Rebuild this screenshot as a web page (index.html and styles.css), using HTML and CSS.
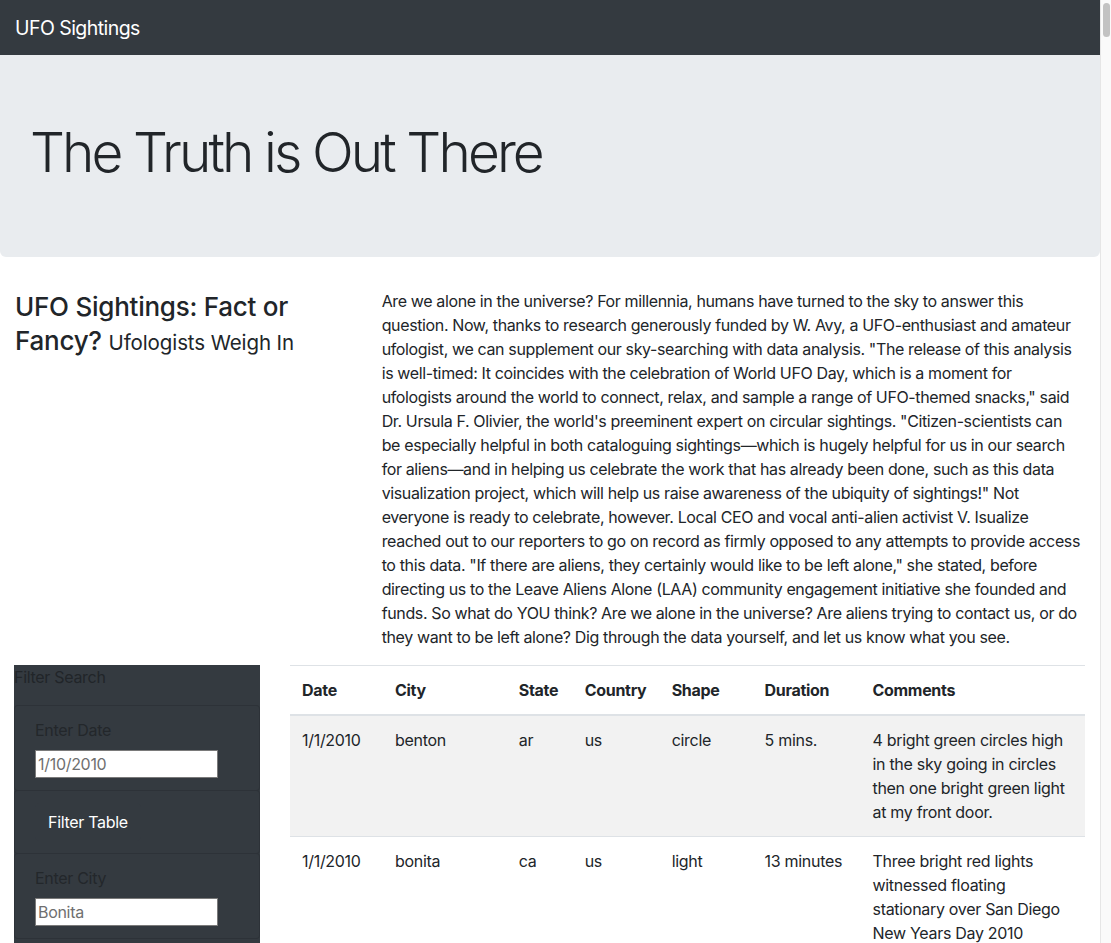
FILE: index.html
```html
<!DOCTYPE html>
<html lang="en">
<head>
<meta charset="utf-8">
<title>UFO Finder</title>
<link rel="stylesheet" href="styles.css">
</head>
<body>
<div class="window">
  <div class="page">
    <nav class="navbar"><a class="brand" href="#">UFO Sightings</a></nav>
    <header class="jumbotron"><h1 class="display">The Truth is Out There</h1></header>
    <div class="container">
      <div class="row">
        <div class="col-4">
          <h3 class="title">UFO Sightings: Fact or Fancy? <small>Ufologists Weigh In</small></h3>
        </div>
        <div class="col-8">
          <p class="lead-text">Are we alone in the universe? For millennia, humans have turned to the sky to answer this<br>
question. Now, thanks to research generously funded by W. Avy, a UFO-enthusiast and amateur<br>
ufologist, we can supplement our sky-searching with data analysis. "The release of this analysis<br>
is well-timed: It coincides with the celebration of World UFO Day, which is a moment for<br>
ufologists around the world to connect, relax, and sample a range of UFO-themed snacks," said<br>
Dr. Ursula F. Olivier, the world's preeminent expert on circular sightings. "Citizen-scientists can<br>
be especially helpful in both cataloguing sightings—which is hugely helpful for us in our search<br>
for aliens—and in helping us celebrate the work that has already been done, such as this data<br>
visualization project, which will help us raise awareness of the ubiquity of sightings!" Not<br>
everyone is ready to celebrate, however. Local CEO and vocal anti-alien activist V. Isualize<br>
reached out to our reporters to go on record as firmly opposed to any attempts to provide access<br>
to this data. "If there are aliens, they certainly would like to be left alone," she stated, before<br>
directing us to the Leave Aliens Alone (LAA) community engagement initiative she founded and<br>
funds. So what do YOU think? Are we alone in the universe? Are aliens trying to contact us, or do<br>
they want to be left alone? Dig through the data yourself, and let us know what you see.</p>
        </div>
      </div>
      <div class="row">
        <div class="col-3">
          <aside class="filters">
            <div class="panel-heading">Filter Search</div>
            <ul class="list-group">
              <li class="list-item">
                <label class="flabel" for="datetime">Enter Date</label>
                <input class="finput" id="datetime" type="text" placeholder="1/10/2010">
              </li>
              <li class="list-item">
                <button class="btn" type="button">Filter Table</button>
              </li>
              <li class="list-item">
                <label class="flabel" for="city">Enter City</label>
                <input class="finput" id="city" type="text" placeholder="Bonita">
              </li>
            </ul>
          </aside>
        </div>
        <div class="col-9">
          <table class="table">
            <thead>
              <tr>
                <th class="c-date">Date</th>
                <th class="c-city">City</th>
                <th class="c-state">State</th>
                <th class="c-country">Country</th>
                <th class="c-shape">Shape</th>
                <th class="c-dur">Duration</th>
                <th class="c-com">Comments</th>
              </tr>
            </thead>
            <tbody>
              <tr class="odd">
                <td>1/1/2010</td><td>benton</td><td>ar</td><td>us</td><td>circle</td><td>5 mins.</td>
                <td>4 bright green circles high in the sky going in circles then one bright green light at my front door.</td>
              </tr>
              <tr>
                <td>1/1/2010</td><td>bonita</td><td>ca</td><td>us</td><td>light</td><td>13 minutes</td>
                <td>Three bright red lights witnessed floating stationary over San Diego New Years Day 2010</td>
              </tr>
            </tbody>
          </table>
        </div>
      </div>
    </div>
  </div>
  <div class="scrollbar"><div class="thumb"></div></div>
</div>
</body>
</html>
```

FILE: styles.css
```css
html, body {
  margin: 0;
  padding: 0;
  height: 943px;
  overflow: hidden;
}
body {
  font-family: Inter, "Liberation Sans", Arial, sans-serif;
  font-size: 16px;
  line-height: 24px;
  color: #212529;
  background: #fff;
}
.window {
  display: flex;
  height: 943px;
}
.page {
  flex: 1;
  min-width: 0;
  overflow: hidden;
}
.scrollbar {
  width: 7px;
  flex: none;
  background: #fafafa;
  border-left: 1px solid #e6e6e6;
  padding: 3px 1px 0 2px;
}
.thumb {
  height: 34px;
  background: #c2c2c2;
  border-radius: 4px;
}
.navbar {
  background: #343a40;
  height: 55px;
  display: flex;
  align-items: center;
  padding: 0 15px;
  box-sizing: border-box;
}
.brand {
  color: #fff;
  font-size: 19.5px;
  line-height: 30px;
  text-decoration: none;
  letter-spacing: -0.55px;
}
.jumbotron {
  background: #e9ecef;
  padding: 64px 30px 63px;
  margin: 0 0 32px;
  border-radius: 0 0 6px 6px;
}
.display {
  margin: 0 0 8px;
  font-size: 55px;
  font-weight: 300;
  line-height: 67px;
  letter-spacing: -2.9px;
}
.container {
  padding: 0 15px;
}
.row {
  display: flex;
  margin: 0 -15px;
}
.col-4 { width: 33.3333%; padding: 0 15px; box-sizing: border-box; }
.col-8 { width: 66.6667%; padding: 0 15px; box-sizing: border-box; }
.col-3 { width: 25%; padding: 0 15px; box-sizing: border-box; }
.col-9 { width: 75%; padding: 0 15px; box-sizing: border-box; }
.title {
  margin: 0;
  font-size: 26px;
  font-weight: 500;
  line-height: 34px;
  padding-top: 1px;
  letter-spacing: -0.25px;
}
.title small {
  font-size: 20.5px;
  font-weight: 400;
  letter-spacing: -0.1px;
}
.lead-text {
  margin: 0 0 16px;
  letter-spacing: -0.37px;
  white-space: nowrap;
}
.filters {
  background: #343a40;
  height: 400px;
  margin-left: -1px;
}
.panel-heading {
  color: #212529;
  line-height: 24px;
  height: 40px;
  letter-spacing: -0.3px;
}
.list-group {
  list-style: none;
  margin: 0;
  padding: 0;
}
.list-item {
  border: 1px solid rgba(0, 0, 0, 0.125);
  border-radius: 4px;
  padding: 12px 20px;
  margin-bottom: -1px;
  background: #343a40;
}
.flabel {
  display: block;
  color: #23272b;
  margin-bottom: 8px;
  letter-spacing: -0.3px;
}
.finput {
  display: block;
  width: 183px;
  height: 28px;
  box-sizing: border-box;
  border: 1px solid #7a7a7a;
  padding: 1px 2px;
  font-family: inherit;
  font-size: 16px;
  letter-spacing: -0.3px;
  background: #fff;
}
.finput::placeholder {
  color: #6f6f6f;
  opacity: 1;
}
.btn {
  background: #343a40;
  color: #fff;
  border: 1px solid #343a40;
  border-radius: 4px;
  padding: 6px 12px;
  font-family: inherit;
  font-size: 16px;
  line-height: 24px;
  letter-spacing: -0.3px;
}
.table {
  width: 100%;
  border-collapse: collapse;
  letter-spacing: -0.3px;
}
.table th, .table td {
  padding: 12px;
  text-align: left;
  vertical-align: top;
  border-top: 1px solid #dee2e6;
}
.table th {
  font-weight: 700;
  border-bottom: 2px solid #dee2e6;
}
.table tr.odd td {
  background: #f2f2f2;
}
.c-date { width: 93px; }
.c-city { width: 124px; }
.c-state { width: 66px; }
.c-country { width: 87px; }
.c-shape { width: 93px; }
.c-dur { width: 108px; }
.c-com { width: 225px; }
.table th {
  box-sizing: border-box;
}
```
